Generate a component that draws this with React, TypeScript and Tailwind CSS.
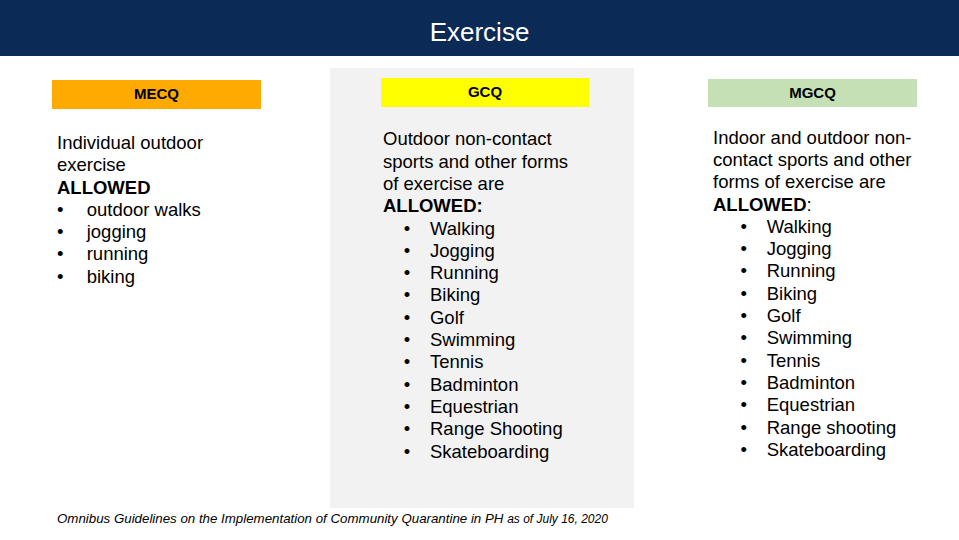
const GCQ_ITEMS = [
  'Walking',
  'Jogging',
  'Running',
  'Biking',
  'Golf',
  'Swimming',
  'Tennis',
  'Badminton',
  'Equestrian',
  'Range Shooting',
  'Skateboarding',
];

const MGCQ_ITEMS = [
  'Walking',
  'Jogging',
  'Running',
  'Biking',
  'Golf',
  'Swimming',
  'Tennis',
  'Badminton',
  'Equestrian',
  'Range shooting',
  'Skateboarding',
];

const MECQ_ITEMS = ['outdoor walks', 'jogging', 'running', 'biking'];

function Label({ text, className }: { text: string; className: string }) {
  return (
    <div className={`flex items-center justify-center text-[15px] font-bold text-black ${className}`}>
      {text}
    </div>
  );
}

interface BulletListProps {
  items: string[];
  indent: string;
  gap: string;
}

function BulletList({ items, indent, gap }: BulletListProps) {
  return (
    <ul>
      {items.map(item => (
        <li key={item} className={`flex ${indent}`}>
          <span className={`shrink-0 ${gap}`}>•</span>
          <span>{item}</span>
        </li>
      ))}
    </ul>
  );
}

export default function App() {
  return (
    <div
      className="w-[959px] h-[540px] overflow-hidden bg-white text-black"
      style={{ fontFamily: '"Liberation Sans", Arial, sans-serif' }}
    >
      <header className="h-[56px] bg-[#0b2a56] pt-[19px] text-center text-[26px] leading-[26px] text-white">
        Exercise
      </header>

      <div className="flex items-start pl-[52px]">
        {/* MECQ */}
        <div className="mt-[24px] w-[209px]">
          <Label text="MECQ" className="h-[29px] bg-[#ffaa00]" />
          <div className="mt-[23px] pl-[5px] text-[18.5px] leading-[22.3px]">
            <p>Individual outdoor</p>
            <p>exercise</p>
            <p className="font-bold">ALLOWED</p>
            <BulletList items={MECQ_ITEMS} indent="pl-0" gap="w-[29.7px]" />
          </div>
        </div>

        {/* GCQ */}
        <div className="ml-[69px] mt-[12px] h-[440px] w-[304px] bg-[#f2f2f2] pl-[51px] pt-[10px]">
          <Label text="GCQ" className="h-[29px] w-[208px] bg-[#ffff00]" />
          <div className="mt-[21.4px] pl-[2px] text-[18.5px] leading-[22.3px]">
            <p>Outdoor non-contact</p>
            <p>sports and other forms</p>
            <p>of exercise are</p>
            <p className="font-bold">ALLOWED:</p>
            <BulletList items={GCQ_ITEMS} indent="pl-[20.7px]" gap="w-[26.3px]" />
          </div>
        </div>

        {/* MGCQ */}
        <div className="ml-[74px] mt-[23px] w-[209px]">
          <Label text="MGCQ" className="h-[28px] bg-[#c5e0b4]" />
          <div className="mt-[19.7px] pl-[5px] text-[18.5px] leading-[22.3px]">
            <p>Indoor and outdoor non-</p>
            <p>contact sports and other</p>
            <p>forms of exercise are</p>
            <p>
              <span className="font-bold">ALLOWED</span>:
            </p>
            <BulletList items={MGCQ_ITEMS} indent="pl-[27.4px]" gap="w-[26.3px]" />
          </div>
        </div>
      </div>

      <p className="mt-[3px] pl-[57px] text-[13.3px] italic leading-[16px]">
        Omnibus Guidelines on the Implementation of Community Quarantine in PH{' '}
        <span className="text-[12px]">as of July 16, 2020</span>
      </p>
    </div>
  );
}
